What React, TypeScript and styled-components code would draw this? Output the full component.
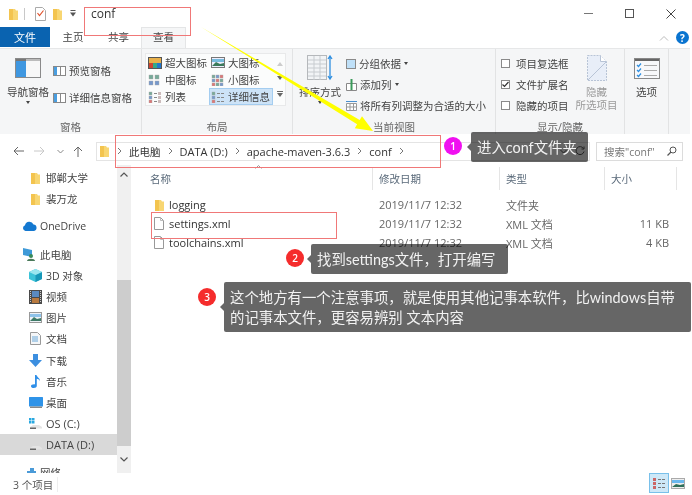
import React from "react";
import styled, { createGlobalStyle } from "styled-components";

const Global = createGlobalStyle`
  html, body { margin: 0; padding: 0; background: #fff; }
  body { font-family: "Open Sans", "Noto Sans CJK SC", sans-serif; font-size: 10.5px; color: #444; }
  * { box-sizing: border-box; }
`;

const Window = styled.div`
  position: relative; width: 692px; height: 495px; overflow: hidden;
  display: flex; flex-direction: column; background: #fff; filter: blur(0.35px);
`;
const TitleBar = styled.div`display: flex; align-items: center; height: 27px; padding-left: 8px;`;
const QuickGap = styled.span<{ $w: number }>`display: inline-flex; width: ${p => p.$w}px; justify-content: center; align-items: center;`;
const VSep = styled.span`width: 1px; height: 12px; background: #c8c8c8;`;
const TitleText = styled.span`font-size: 12px; color: #333; margin-left: 5px;`;
const Controls = styled.div`margin-left: auto; display: flex; padding-right: 1px;`;
const Control = styled.span`width: 41px; height: 27px; display: flex; align-items: center; justify-content: center;`;

const TabBar = styled.div`display: flex; height: 21px; align-items: flex-end; position: relative;`;
const FileTab = styled.div`width: 50px; height: 20px; margin-bottom: 1px; background: #0a63b0; color: #fff; font-size: 11px; display: flex; align-items: center; justify-content: center;`;
const Tab = styled.div<{ $w: number; $active?: boolean }>`
  width: ${p => p.$w}px; height: 21px; padding-bottom: 3px; display: flex; align-items: center; justify-content: center; font-size: 10.5px;
  color: #444;
  ${p => p.$active ? "background:#f5f6f7; border: 1px solid #e4e5e6; border-bottom: none;" : ""}
`;
const TabRight = styled.div`margin-left: auto; display: flex; align-items: center; gap: 7px; padding-right: 3px; height: 21px;`;
const Help = styled.span`width: 13px; height: 13px; border-radius: 50%; background: #0a74d0; color: #fff; font-size: 10px; font-weight: 700; display: flex; align-items: center; justify-content: center;`;

const Ribbon = styled.div`display: flex; height: 86px; width: 690px; background: #f5f6f7; border-top: 1px solid #e6e7e8;`;
const Group = styled.div<{ $w: number }>`width: ${p => p.$w}px; display: flex; flex-direction: column; border-right: 1px solid #e2e3e4;`;
const GroupBody = styled.div`height: 71px; display: flex;`;
const GroupLabel = styled.div`height: 14px; text-align: center; line-height: 14px; color: #666; font-size: 10.5px;`;

const BigTool = styled.div<{ $w: number; $ml?: number; $mt?: number }>`
  width: ${p => p.$w}px; margin-left: ${p => p.$ml ?? 0}px; padding-top: ${p => p.$mt ?? 8}px;
  display: flex; flex-direction: column; align-items: center; line-height: 13px; text-align: center;
`;
const ToolLabel = styled.span<{ $muted?: boolean; $mt?: number }>`color: ${p => p.$muted ? "#9a9a9a" : "#444"}; margin-top: ${p => p.$mt ?? 0}px; white-space: nowrap;`;
const Caret = styled.span`width: 0; height: 0; border: 2.5px solid transparent; border-top: 3px solid #444; border-bottom: none; margin-top: 2px;`;
const SmallCaret = styled(Caret)`margin: 0 0 0 0; display: inline-block; vertical-align: middle;`;
const RowCol = styled.div<{ $h: number; $pt: number; $ml: number }>`
  display: flex; flex-direction: column; margin-left: ${p => p.$ml}px; padding-top: ${p => p.$pt}px;
  & > div { height: ${p => p.$h}px; }
`;
const IconRow = styled.div<{ $gap?: number }>`display: flex; align-items: center; gap: ${p => p.$gap ?? 3}px; white-space: nowrap;`;

const Gallery = styled.div`
  margin: 4px 0 0 3px; width: 141px; height: 53px; background: #fbfcfc; border: 1px solid #e8e9ea;
  display: grid; grid-template-columns: 64px 64px 11px;
`;
const GalleryList = styled.div`
  grid-column: 1 / 3; display: grid; grid-template-columns: 63px 64px; grid-auto-rows: 17px;
`;
const GalleryItem = styled.div<{ $sel?: boolean }>`
  display: flex; align-items: center; gap: 3px; padding-left: 2px; white-space: nowrap;
  ${p => p.$sel ? "background:#cde3f7; outline: 1px solid #a4cdf0; outline-offset:-1px;" : ""}
`;
const GalleryScroll = styled.div`display: flex; flex-direction: column; align-items: center; justify-content: space-around; padding: 3px 0; color: #666;`;

const Check = styled.span<{ $on?: boolean }>`
  width: 9px; height: 9px; border: 1px solid #8a8a8a; background: #fff; display: inline-flex; align-items: center; justify-content: center;
`;

const AddressRow = styled.div`height: 31px; display: flex; align-items: center; position: relative; padding-top: 3px;`;
const NavArrows = styled.div`width: 96px; display: flex; align-items: center; padding-left: 11px;`;
const NavSlot = styled.span<{ $w: number }>`width: ${p => p.$w}px; display: flex; justify-content: center;`;
const AddressBox = styled.div`width: 494px; height: 19px; border: 1px solid #e4e4e4; display: flex; align-items: center; padding: 0 3px; color: #333; font-size: 10.5px;`;
const Crumb = styled.span<{ $latin?: boolean }>`white-space: nowrap; font-size: ${p => p.$latin ? 11 : 10.5}px;`;
const CrumbSep = styled.span<{ $w?: number }>`width: ${p => p.$w ?? 19}px; display: flex; justify-content: center;`;
const AddressTail = styled.span`margin-left: auto; display: flex; align-items: center; gap: 8px; padding-right: 1px;`;
const SearchBox = styled.div`margin-left: 6px; width: 87px; height: 19px; border: 1px solid #dcdcdc; display: flex; align-items: center; padding: 0 5px 0 7px; color: #777; font-size: 10.5px; justify-content: space-between; white-space: nowrap;`;

const Main = styled.div`flex: 1; display: flex; min-height: 0;`;
const Sidebar = styled.div`width: 117px; padding-top: 2px; overflow: hidden;`;
const NavItem = styled.div<{ $pl: number; $mt?: number; $sel?: boolean; $latin?: boolean }>`
  height: 21.2px; margin-top: ${p => p.$mt ?? 0}px; padding-left: ${p => p.$pl}px; display: flex; align-items: center; gap: 3px; white-space: nowrap; color: #444;
  font-size: ${p => p.$latin ? 11 : 10.5}px;
  ${p => p.$sel ? "background:#d9d9d9;" : ""}
`;
const NavIconSlot = styled.span`width: 15px; display: flex; justify-content: center; flex: none;`;
const ScrollTrack = styled.div`width: 14px; background: #f0f0f0; display: flex; flex-direction: column; align-items: center;`;
const ScrollBtn = styled.div<{ $h: number }>`height: ${p => p.$h}px; display: flex; align-items: center; justify-content: center;`;
const ScrollThumb = styled.div`width: 14px; height: 166px; background: #cdcdcd;`;
const ListArea = styled.div`flex: 1; padding-left: 0;`;
const Columns = "242px 127px 105px 72px";
const HeaderRow = styled.div`display: grid; grid-template-columns: ${Columns}; height: 26px; margin-bottom: 4px; align-items: center; color: #5a6a7a; position: relative;`;
const HeadCell = styled.div<{ $pl: number }>`padding-left: ${p => p.$pl}px; height: 23px; line-height: 25px; border-right: 1px solid #e5e5e5;`;
const SortMark = styled.span`position: absolute; left: 124px; top: 0; display: flex;`;
const Row = styled.div`display: grid; grid-template-columns: ${Columns}; height: 19px; align-items: center;`;
const NameCell = styled.div`display: flex; align-items: center; padding-left: 23px; gap: 5px; font-size: 11px; color: #333;`;
const NameIcon = styled.span`width: 10px; display: flex; justify-content: center; flex: none;`;
const Cell = styled.div<{ $right?: boolean }>`padding: 0 8px 0 6px; color: #666; font-size: 11px; white-space: nowrap; text-align: ${p => p.$right ? "right" : "left"};`;

const StatusBar = styled.div`height: 22px; display: flex; align-items: center; padding: 0 6px 0 13px; color: #555; background: #fff; position: relative;`;
const StatusText = styled.span`padding-right: 4px; margin-right: auto; border-right: 1px solid #eee;`;
const ViewBtn = styled.span<{ $on?: boolean }>`
  width: ${p => p.$on ? 20 : 17}px; height: 20px; margin-bottom: 2px; display: flex; align-items: center; justify-content: center;
  ${p => p.$on ? "background:#cde8f8; border:1px solid #79c0ea;" : ""}
`;

const RedBox = styled.div<{ $x: number; $y: number; $w: number; $h: number }>`
  position: absolute; left: ${p => p.$x}px; top: ${p => p.$y}px; width: ${p => p.$w}px; height: ${p => p.$h}px; border: 1px solid #f07878;
`;
const Callout = styled.div<{ $x: number; $y: number; $w: number }>`
  position: absolute; left: ${p => p.$x}px; top: ${p => p.$y}px; width: ${p => p.$w}px; padding: 6px 6px 4px;
  background: rgba(0, 0, 0, 0.6); color: #f2f2f2; border-radius: 2px; font-size: 14.4px; line-height: 20px; white-space: nowrap;
  font-family: "Lato", "Noto Sans CJK SC", sans-serif;
  &::before { content: ""; position: absolute; left: -4px; top: 50%; margin-top: -4px; border: 4px solid transparent; border-left: none; border-right-color: rgba(0, 0, 0, 0.6); }
`;
const Badge = styled.div<{ $x: number; $y: number; $c: string }>`
  position: absolute; left: ${p => p.$x - 9}px; top: ${p => p.$y - 9}px; width: 18px; height: 18px; border-radius: 50%;
  background: ${p => p.$c}; color: #fff; font-size: 10px; font-weight: 600; display: flex; align-items: center; justify-content: center;
`;
const ArrowSvg = styled.svg`position: absolute; left: 0; top: 0; pointer-events: none;`;

const Folder = ({ w = 9, h = 12 }: { w?: number; h?: number }) => (
  <svg width={w} height={h} viewBox="0 0 9 12"><path d="M0 1h6l1 1.5h2V12H0z" fill="#f8d672" /><path d="M0 1h4v11H0z" fill="#f3c44f" /></svg>
);
const FileIco = () => (
  <svg width="10" height="13" viewBox="0 0 10 13"><path d="M.5.5h6l3 3v9H.5z" fill="#fff" stroke="#999" /><path d="M6.5.5v3h3" fill="none" stroke="#bbb" /></svg>
);
const Chevron = ({ d = "M2 1l3 3-3 3" }: { d?: string }) => (
  <svg width="7" height="8" viewBox="0 0 7 8"><path d={d} fill="none" stroke="#777" strokeWidth="1" /></svg>
);
const ListIco = ({ kind }: { kind: "xl" | "l" | "m" | "s" | "list" | "d" }) => {
  if (kind === "xl") return <svg width="14" height="12" viewBox="0 0 14 12"><rect width="14" height="12" fill="#555" /><rect x="1" y="1" width="12" height="5" fill="#e8b04a" /><rect x="1" y="6" width="4" height="5" fill="#c43" /><rect x="5" y="6" width="4" height="5" fill="#3a8" /><rect x="9" y="6" width="4" height="5" fill="#27c" /></svg>;
  if (kind === "l") return <svg width="14" height="11" viewBox="0 0 14 11"><rect x=".5" y=".5" width="13" height="10" fill="#eef" stroke="#777" /><rect x="1" y="2" width="12" height="3" fill="#7bd" /><path d="M1 9l4-4 4 2 4-1v3z" fill="#3a7a5a" /></svg>;
  const cols = kind === "s" ? [1, 5, 9] : kind === "m" ? [1, 7] : [1];
  const rows = kind === "s" ? [1, 5, 9] : kind === "m" ? [1, 7] : [1, 5, 9];
  const s = kind === "m" ? 4 : 3;
  return (
    <svg width="14" height="12" viewBox="0 0 14 12">
      {cols.map(x => rows.map((y, i) => <rect key={`${x}${y}`} x={x} y={y} width={s} height={s} fill={["#d77", "#7a9", "#79c"][(i + x) % 3]} stroke="#aaa" strokeWidth=".4" />))}
      {(kind === "list" || kind === "d") && rows.map(y => <path key={y} d={`M6 ${y + 1.5}h${kind === "d" ? 8 : 3}`} stroke="#888" strokeDasharray={kind === "d" ? "3 1" : undefined} />)}
      {kind === "list" && rows.map(y => <rect key={y} x="10" y={y} width="3" height="3" fill="#cbb" />)}
    </svg>
  );
};
const PaneIco = () => (
  <svg width="13" height="10" viewBox="0 0 13 10"><rect x=".5" y=".5" width="12" height="9" fill="#fff" stroke="#888" /><rect x="1" y="1" width="3" height="8" fill="#4a9ee0" /><path d="M7.5 1v8" stroke="#888" /></svg>
);
const Drive = ({ win }: { win?: boolean }) => (
  <svg width="14" height="12" viewBox="0 0 14 12">
    {win && <g fill="#29a8e0"><rect x="0" y="0" width="2.5" height="2.5" /><rect x="3" y="0" width="2.5" height="2.5" /><rect x="0" y="3" width="2.5" height="2.5" /><rect x="3" y="3" width="2.5" height="2.5" /></g>}
    <path d="M1 9l3-2h6l3 2v1.5H1z" fill="#e4e4e4" /><path d="M1 9.5h6v1.5H1z" fill="#666" />
  </svg>
);

const navIcons: Record<string, React.ReactNode> = {
  cube: <svg width="13" height="13" viewBox="0 0 13 13"><path d="M6.5 0L13 3v7l-6.500 3L0 10V3z" fill="#3cc3d8" /><path d="M6.500 6L13 3v7l-6.500 3z" fill="#1797b8" /><path d="M6.500 6L0 3l6.500-3L13 3z" fill="#9ae6ef" /></svg>,
  film: <svg width="13" height="14" viewBox="0 0 13 14"><rect width="13" height="14" fill="#4a4a4a" /><rect x="3" y="1" width="7" height="6" fill="#5a8ac0" /><rect x="3" y="8" width="7" height="5" fill="#b87a40" /><path d="M1.500 1v12M11.500 1v12" stroke="#ccc" strokeDasharray="1 1" /></svg>,
  pic: <svg width="13" height="11" viewBox="0 0 13 11"><rect x=".5" y=".5" width="12" height="10" fill="#eef2f7" stroke="#999" /><rect x="1" y="2" width="11" height="3" fill="#8fc3ea" /><path d="M1 9l4-4 3 2 4-1v3H1z" fill="#3d7a66" /></svg>,
  doc: <svg width="11" height="13" viewBox="0 0 11 13"><path d="M.5.500h7l3 3v9H.5z" fill="#f4f6f8" stroke="#999" /><path d="M2 5h6M2 7h6M2 9h6" stroke="#6aa8d8" /></svg>,
  down: <svg width="13" height="13" viewBox="0 0 13 13"><path d="M4 0h5v6h4l-6.500 7L0 6h4z" fill="#3c8fe0" /></svg>,
  music: <svg width="9" height="13" viewBox="0 0 9 13"><path d="M4 0h1.500c.3 2 3.500 3 3.500 6-1-1.500-2.200-2-3.200-2.200V11c0 1.200-1.300 2-3 2S0 12.300 0 11.200C0 10 1.500 9.200 4 9.400z" fill="#2f8fe8" /></svg>,
  desk: <svg width="14" height="11" viewBox="0 0 14 11"><rect width="14" height="9.500" rx=".5" fill="#2f93e8" /><rect x="1" y="9.500" width="12" height="1.500" fill="#888" /></svg>,
  cloud: <svg width="15" height="10" viewBox="0 0 15 10"><path d="M3.500 10A3 3 0 0 1 3 4.200 4.500 4.500 0 0 1 11.500 3.500 3.300 3.300 0 0 1 12 10z" fill="#1478d0" /></svg>,
  pc: <svg width="13" height="13" viewBox="0 0 13 13"><rect x="0" y="0" width="9" height="7" fill="#3f9ad8" transform="skewY(12)" /><circle cx="8" cy="8" r="2" fill="#3a8a5a" /><path d="M4 13c0-3 8-3 8 0z" fill="#4a7a5a" /></svg>,
  net: <svg width="14" height="11" viewBox="0 0 14 11"><path d="M1 8h3V4h3V1h4v3h2v6H1z" fill="#4a9ad8" /></svg>,
};

const Sort = () => (
  <svg width="26" height="26" viewBox="0 0 26 26">
    <rect x=".5" y=".5" width="19" height="24" fill="#f2f4f6" stroke="#b5b8bb" />
    <path d="M1 5h18M1 9h18M1 13h18M1 17h18M1 21h18M7 1v24M13 1v24" stroke="#c8ccd0" />
    <path d="M23 1v23M21 4l2-3 2 3M21 21l2 3 2-3" fill="none" stroke="#2f8fe0" strokeWidth="1.300" />
  </svg>
);
const HideDoc = () => (
  <svg width="20" height="26" viewBox="0 0 20 26">
    <path d="M.5.500h13l6 6v19H.5z" fill="#e8eef8" stroke="#b8c4d6" strokeDasharray="2 1" />
    <path d="M13.500.500v6h6" fill="#fff" stroke="#b8c4d6" /><path d="M1 25L19 7" stroke="#b8c4d6" />
  </svg>
);
const Options = () => (
  <svg width="26" height="21" viewBox="0 0 26 21">
    <rect x=".5" y=".5" width="25" height="20" fill="#f7f8fa" stroke="#888" />
    <rect x="1" y="1" width="24" height="2" fill="#666" />
    <path d="M3 7l1.500 1.500L7 5.500M3 12l1.500 1.500L7 10.500M3 17l1.500 1.500L7 15.500" fill="none" stroke="#2f8fe0" strokeWidth="1.200" />
    <path d="M10 7.500h13M10 12.500h13M10 17.500h13" stroke="#aaa" />
  </svg>
);
const NavPaneIco = () => (
  <svg width="26" height="20" viewBox="0 0 26 20">
    <rect x=".5" y=".5" width="25" height="19" fill="#f7f7f7" stroke="#8a8a8a" />
    <rect x="1" y="1" width="10" height="18" fill="#3f97e0" /><rect x="11" y="1" width="14" height="2" fill="#bbb" /><rect x="1" y="1" width="10" height="2" fill="#777" />
  </svg>
);

const navTop: [string, keyof typeof navIcons][] = [
  ["3D 对象", "cube"], ["视频", "film"], ["图片", "pic"], ["文档", "doc"],
  ["下载", "down"], ["音乐", "music"], ["桌面", "desk"],
];

export default function App() {
  return (
    <>
      <Global />
      <Window>
        <TitleBar>
          <QuickGap $w={10}><Folder /></QuickGap>
          <QuickGap $w={12}><VSep /></QuickGap>
          <QuickGap $w={20}>
            <svg width="11" height="14" viewBox="0 0 11 14"><path d="M.5.500h7l3 3v10H.500z" fill="#fff" stroke="#aaa" /><path d="M2.500 6l2 2.500 4-5" fill="none" stroke="#e0502a" strokeWidth="1.200" /></svg>
          </QuickGap>
          <QuickGap $w={14}><Folder /></QuickGap>
          <QuickGap $w={18}><svg width="6" height="7" viewBox="0 0 6 7"><path d="M.5 0h5v1h-5zM0 2.500h6L3 6.500z" fill="#555" /></svg></QuickGap>
          <QuickGap $w={4}><VSep /></QuickGap>
          <TitleText>conf</TitleText>
          <Controls>
            <Control><svg width="10" height="2"><rect width="9" height="1" fill="#777" /></svg></Control>
            <Control><svg width="10" height="10"><rect x=".5" y=".5" width="8" height="8" fill="none" stroke="#555" /></svg></Control>
            <Control><svg width="10" height="10"><path d="M.5.500l9 9M9.500.500l-9 9" stroke="#444" /></svg></Control>
          </Controls>
        </TitleBar>
        <TabBar>
          <FileTab>文件</FileTab>
          <Tab $w={46}>主页</Tab>
          <Tab $w={45}>共享</Tab>
          <Tab $w={45} $active>查看</Tab>
          <TabRight>
            <svg width="10" height="6" viewBox="0 0 10 6"><path d="M1 5.500l4-4 4 4" fill="none" stroke="#bbb" /></svg>
            <Help>?</Help>
          </TabRight>
        </TabBar>
        <Ribbon>
          <Group $w={142}>
            <GroupBody>
              <BigTool $w={46} $ml={5} $mt={9}>
                <NavPaneIco />
                <ToolLabel $mt={8}>导航窗格</ToolLabel>
                <Caret />
              </BigTool>
              <RowCol $h={27} $pt={8} $ml={2}>
                <IconRow><PaneIco />预览窗格</IconRow>
                <IconRow><PaneIco />详细信息窗格</IconRow>
              </RowCol>
            </GroupBody>
            <GroupLabel>窗格</GroupLabel>
          </Group>
          <Group $w={151}>
            <GroupBody>
              <Gallery>
                <GalleryList>
                  <GalleryItem><ListIco kind="xl" />超大图标</GalleryItem>
                  <GalleryItem><ListIco kind="l" />大图标</GalleryItem>
                  <GalleryItem><ListIco kind="m" />中图标</GalleryItem>
                  <GalleryItem><ListIco kind="s" />小图标</GalleryItem>
                  <GalleryItem><ListIco kind="list" />列表</GalleryItem>
                  <GalleryItem $sel><ListIco kind="d" />详细信息</GalleryItem>
                </GalleryList>
                <GalleryScroll>
                  <svg width="6" height="4"><path d="M3 0l3 4H0z" fill="#ccc" /></svg>
                  <svg width="6" height="4"><path d="M0 0h6L3 4z" fill="#666" /></svg>
                  <svg width="6" height="6"><path d="M0 0h6v1H0zM0 2h6L3 6z" fill="#666" /></svg>
                </GalleryScroll>
              </Gallery>
            </GroupBody>
            <GroupLabel>布局</GroupLabel>
          </Group>
          <Group $w={203}>
            <GroupBody>
              <BigTool $w={46} $ml={4} $mt={6}>
                <Sort />
                <ToolLabel $mt={5}>排序方式</ToolLabel>
                <Caret />
              </BigTool>
              <RowCol $h={21} $pt={4} $ml={3}>
                <IconRow>
                  <svg width="10" height="10"><rect x=".5" y=".5" width="9" height="9" fill="#bfe0f8" stroke="#8a8a8a" /></svg>
                  分组依据<SmallCaret />
                </IconRow>
                <IconRow>
                  <svg width="11" height="12" viewBox="0 0 11 12"><path d="M.5 4.500h10v7H.5z" fill="#fff" stroke="#888" /><path d="M5.500 0v11" stroke="#3a9a5a" strokeWidth="2" /></svg>
                  添加列<SmallCaret />
                </IconRow>
                <IconRow>
                  <svg width="11" height="11" viewBox="0 0 11 11"><path d="M.5 3.500h10v7H.5zM.5 7h10M4 4v7M7.500 4v7" fill="#fff" stroke="#999" /><path d="M0 1.500h11" stroke="#4a90d0" /></svg>
                  将所有列调整为合适的大小
                </IconRow>
              </RowCol>
            </GroupBody>
            <GroupLabel>当前视图</GroupLabel>
          </Group>
          <Group $w={129}>
            <GroupBody>
              <RowCol $h={21} $pt={4} $ml={5}>
                <IconRow $gap={6}><Check />项目复选框</IconRow>
                <IconRow $gap={6}><Check $on><svg width="7" height="7" viewBox="0 0 7 7"><path d="M.5 3.500l2 2 4-4.500" fill="none" stroke="#333" strokeWidth="1.200" /></svg></Check>文件扩展名</IconRow>
                <IconRow $gap={6}><Check />隐藏的项目</IconRow>
              </RowCol>
              <BigTool $w={44} $ml={6} $mt={6}>
                <HideDoc />
                <ToolLabel $muted $mt={5}>隐藏</ToolLabel>
                <ToolLabel $muted>所选项目</ToolLabel>
              </BigTool>
            </GroupBody>
            <GroupLabel>显示/隐藏</GroupLabel>
          </Group>
          <Group $w={44}>
            <GroupBody>
              <BigTool $w={44} $mt={9}>
                <Options />
                <ToolLabel $mt={7}>选项</ToolLabel>
              </BigTool>
            </GroupBody>
          </Group>
        </Ribbon>
        <AddressRow>
          <NavArrows>
            <NavSlot $w={14}><svg width="11" height="10" viewBox="0 0 11 10"><path d="M5 1L1 5l4 4M1 5h10" fill="none" stroke="#666" /></svg></NavSlot>
            <NavSlot $w={28}><svg width="11" height="10" viewBox="0 0 11 10"><path d="M6 1l4 4-4 4M10 5H0" fill="none" stroke="#c8c8c8" /></svg></NavSlot>
            <NavSlot $w={14}><svg width="7" height="5" viewBox="0 0 7 5"><path d="M.5 1l3 3 3-3" fill="none" stroke="#888" /></svg></NavSlot>
            <NavSlot $w={22}><svg width="10" height="11" viewBox="0 0 10 11"><path d="M1 5l4-4 4 4M5 1v10" fill="none" stroke="#666" /></svg></NavSlot>
          </NavArrows>
          <AddressBox>
            <Folder />
            <CrumbSep $w={20}><Chevron /></CrumbSep>
            <Crumb>此电脑</Crumb>
            <CrumbSep><Chevron /></CrumbSep>
            <Crumb $latin>DATA (D:)</Crumb>
            <CrumbSep><Chevron /></CrumbSep>
            <Crumb $latin>apache-maven-3.6.3</Crumb>
            <CrumbSep><Chevron /></CrumbSep>
            <Crumb $latin>conf</Crumb>
            <CrumbSep><Chevron /></CrumbSep>
            <AddressTail>
              <svg width="7" height="5" viewBox="0 0 7 5"><path d="M.5 1l3 3 3-3" fill="none" stroke="#555" /></svg>
              <svg width="10" height="10" viewBox="0 0 10 10"><path d="M8.500 2.500A4 4 0 1 0 9 5.500M9 .5v2.500H6.500" fill="none" stroke="#555" /></svg>
            </AddressTail>
          </AddressBox>
          <SearchBox>
            搜索"conf"
            <svg width="10" height="10" viewBox="0 0 10 10"><circle cx="6" cy="4" r="3" fill="none" stroke="#555" /><path d="M4 6L.5 9.500" stroke="#555" strokeWidth="1.300" /></svg>
          </SearchBox>
        </AddressRow>
        <Main>
          <Sidebar>
            <NavItem $pl={28}><NavIconSlot><Folder /></NavIconSlot>邯郸大学</NavItem>
            <NavItem $pl={28}><NavIconSlot><Folder /></NavIconSlot>裴万龙</NavItem>
            <NavItem $pl={22} $mt={6.5}><NavIconSlot>{navIcons.cloud}</NavIconSlot>OneDrive</NavItem>
            <NavItem $pl={22} $mt={6.5}><NavIconSlot>{navIcons.pc}</NavIconSlot>此电脑</NavItem>
            {navTop.map(([label, icon]) => (
              <NavItem key={label} $pl={28}><NavIconSlot>{navIcons[icon]}</NavIconSlot>{label}</NavItem>
            ))}
            <NavItem $pl={28} $latin><NavIconSlot><Drive win /></NavIconSlot>OS (C:)</NavItem>
            <NavItem $pl={28} $latin $sel><NavIconSlot><Drive /></NavIconSlot>DATA (D:)</NavItem>
            <NavItem $pl={22} $mt={6}><NavIconSlot>{navIcons.net}</NavIconSlot>网络</NavItem>
          </Sidebar>
          <ScrollTrack>
            <ScrollBtn $h={18}><svg width="8" height="5" viewBox="0 0 8 5"><path d="M.5 4.500L4 1l3.500 3.500" fill="none" stroke="#555" strokeWidth="1.200" /></svg></ScrollBtn>
            <ScrollBtn $h={97} />
            <ScrollThumb />
            <ScrollBtn $h={27}><svg width="8" height="5" viewBox="0 0 8 5"><path d="M.5.500L4 4l3.500-3.500" fill="none" stroke="#555" strokeWidth="1.200" /></svg></ScrollBtn>
          </ScrollTrack>
          <ListArea>
            <HeaderRow>
              <SortMark><svg width="7" height="4" viewBox="0 0 7 4"><path d="M.5 3.500l3-3 3 3" fill="none" stroke="#999" /></svg></SortMark>
              <HeadCell $pl={19}>名称</HeadCell>
              <HeadCell $pl={6}>修改日期</HeadCell>
              <HeadCell $pl={6}>类型</HeadCell>
              <HeadCell $pl={6}>大小</HeadCell>
            </HeaderRow>
            <Row><NameCell><NameIcon><Folder /></NameIcon>logging</NameCell><Cell>2019/11/7 12:32</Cell><Cell>文件夹</Cell><Cell $right /></Row>
            <Row><NameCell><NameIcon><FileIco /></NameIcon>settings.xml</NameCell><Cell>2019/11/7 12:32</Cell><Cell>XML 文档</Cell><Cell $right>11 KB</Cell></Row>
            <Row><NameCell><NameIcon><FileIco /></NameIcon>toolchains.xml</NameCell><Cell>2019/11/7 12:32</Cell><Cell>XML 文档</Cell><Cell $right>4 KB</Cell></Row>
          </ListArea>
        </Main>
        <StatusBar>
          <StatusText>3 个项目</StatusText>
          <ViewBtn $on><svg width="14" height="12" viewBox="0 0 14 12"><path d="M1 1h3v3H1zM1 5h3v3H1zM1 9h3v3H1z" fill="#c66" /><path d="M6 2.500h8M6 6.500h8M6 10.500h8" stroke="#777" strokeDasharray="3 1" /></svg></ViewBtn>
          <ViewBtn><svg width="14" height="11" viewBox="0 0 14 11"><rect x=".5" y=".5" width="13" height="10" fill="#eee" stroke="#aaa" /><rect x="1" y="2" width="12" height="3" fill="#6ab8ee" /><path d="M1 9l4-3 4 1 4-1v3z" fill="#2f6f5a" /></svg></ViewBtn>
        </StatusBar>

        <ArrowSvg width="692" height="495" viewBox="0 0 692 495">
          <path d="M201 27L359.700 120.100L362 116.200L373 131L354.800 128.200L357.100 124.300Z" fill="#ffff00" />
        </ArrowSvg>
        <RedBox $x={84} $y={7} $w={107} $h={29} />
        <RedBox $x={115} $y={135} $w={326} $h={33} />
        <RedBox $x={151} $y={212} $w={186} $h={27} />
        <Badge $x={453} $y={146} $c="#f010f0">1</Badge>
        <Callout $x={471} $y={132} $w={117}>进入conf文件夹</Callout>
        <Badge $x={295} $y={258} $c="#f52c2c">2</Badge>
        <Callout $x={311} $y={244} $w={197}>找到settings文件，打开编写</Callout>
        <Badge $x={207} $y={297} $c="#f52c2c">3</Badge>
        <Callout $x={224} $y={282} $w={467}>这个地方有一个注意事项，就是使用其他记事本软件，比windows自带<br />的记事本文件，更容易辨别 文本内容</Callout>
      </Window>
    </>
  );
}
